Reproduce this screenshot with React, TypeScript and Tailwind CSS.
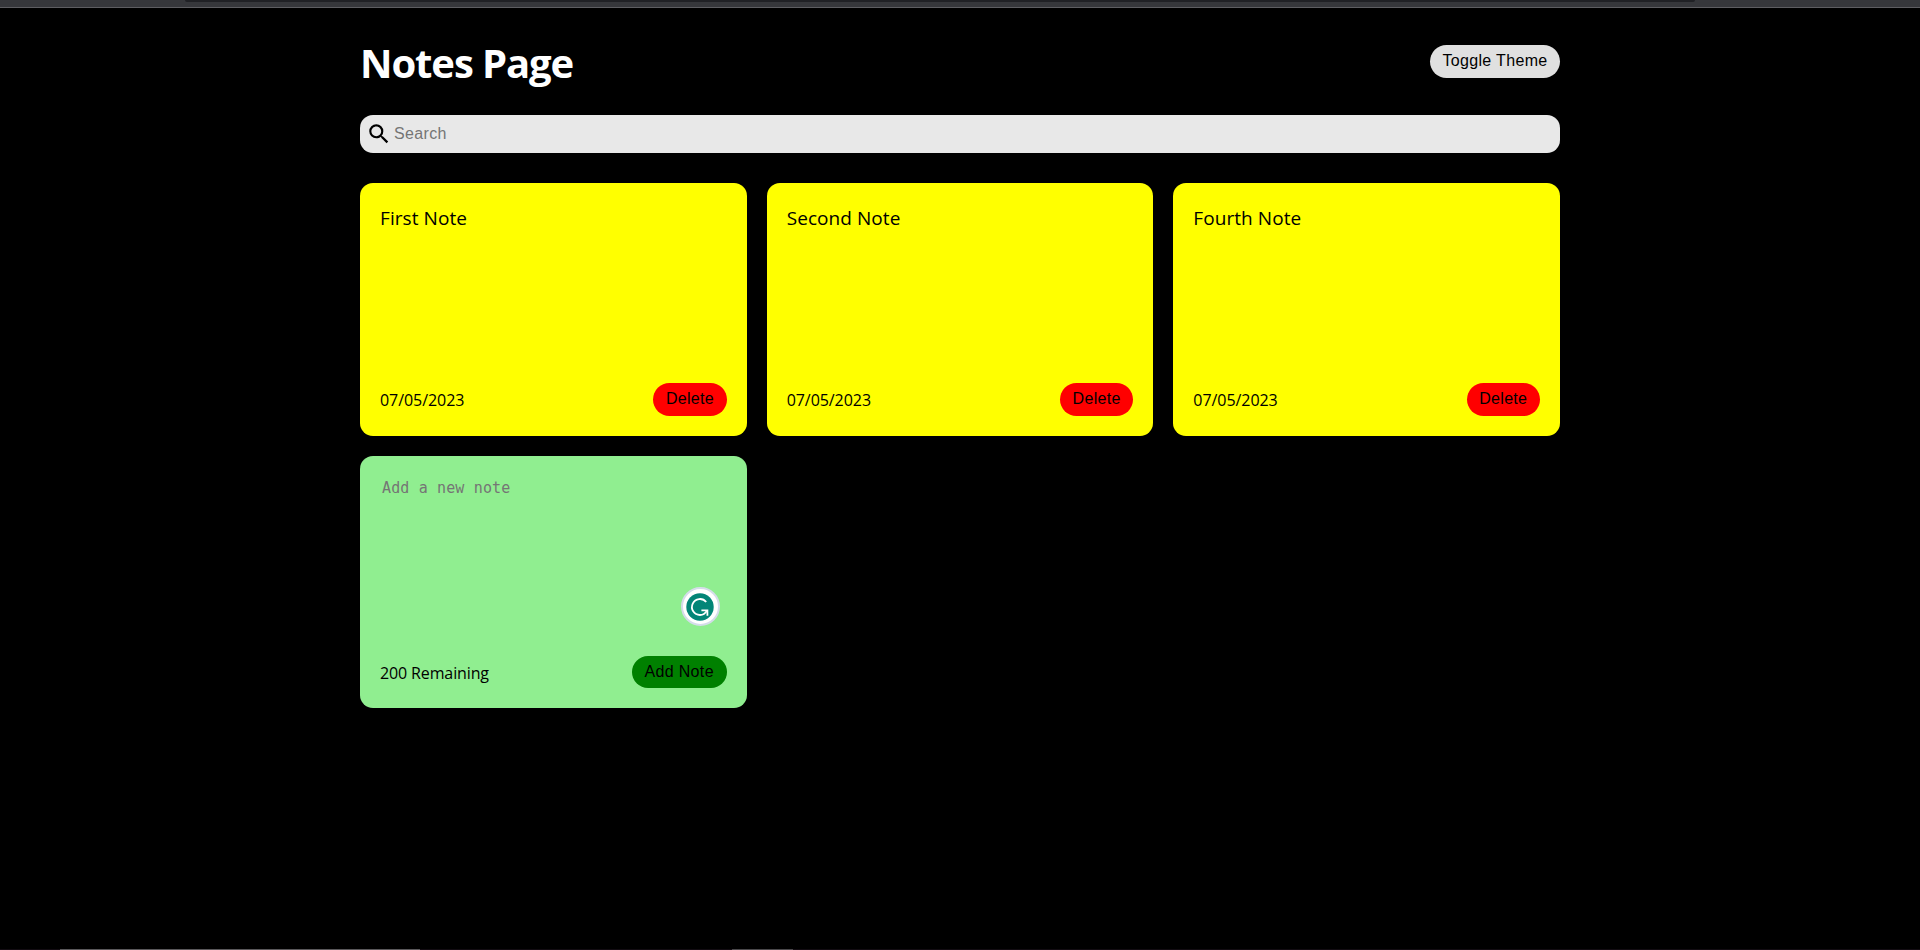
import { useState } from "react";

const notes = [
  { id: 1, text: "First Note", date: "07/05/2023" },
  { id: 2, text: "Second Note", date: "07/05/2023" },
  { id: 3, text: "Fourth Note", date: "07/05/2023" },
];

const LIMIT = 200;

function SearchIcon() {
  return (
    <svg viewBox="0 0 24 24" className="size-[26px] shrink-0" fill="black">
      <path d="M15.5 14h-.79l-.28-.27A6.471 6.471 0 0 0 16 9.5 6.5 6.5 0 1 0 9.5 16c1.61 0 3.09-.59 4.23-1.57l.27.28v.79l5 4.99L20.49 19l-4.99-5zm-6 0C7.01 14 5 11.99 5 9.5S7.01 5 9.5 5 14 7.01 14 9.5 11.99 14 9.5 14z" />
    </svg>
  );
}

function GrammarBadge() {
  return (
    <div className="absolute right-[27px] bottom-[82px] flex size-[39px] items-center justify-center rounded-full border-2 border-[#d5dcea] bg-white">
      <svg viewBox="0 0 28 28" className="size-7">
        <circle cx="14" cy="14" r="13.7" fill="#028577" />
        <g fill="none" stroke="white" strokeWidth="1.8">
          <path d="M20.2 9A8 8 0 1 0 14 22C17 22 19.2 20.6 20.9 17.6" />
          <path d="M15.4 17.3H21.4V22.8" />
        </g>
      </svg>
    </div>
  );
}

function NoteCard({ text, date }: { text: string; date: string }) {
  return (
    <article className="flex flex-col justify-between rounded-[13px] bg-[#ffff00] p-5">
      <p className="pt-px text-[19px] leading-[28px] tracking-[0.07px]">{text}</p>
      <div className="flex items-center justify-between">
        <span className="pt-px text-[16px] tracking-[-0.06px]">{date}</span>
        <button className="flex h-[33px] w-[73.4px] justify-center rounded-full bg-[#ff0000] pt-[5px] font-['Liberation_Sans',sans-serif] text-[16px] leading-[22px] tracking-[0.3px]">
          Delete
        </button>
      </div>
    </article>
  );
}

export default function App() {
  const [draft, setDraft] = useState("");
  return (
    <div className="relative flex h-[950px] flex-col overflow-hidden bg-black font-['Open_Sans','Noto_Sans',sans-serif] text-black">
      <div className="h-2 shrink-0 border-b border-[#5e5e62] bg-[#36373b]">
        <div className="mr-[225px] ml-[185px] h-0.5 rounded-b-sm bg-[#202125]" />
      </div>
      <main className="mx-auto w-[1200px] flex-1">
        <header className="flex h-[107px] items-start justify-between pt-[37px]">
          <h1 className="text-[40px] leading-[36px] font-bold tracking-[-1.1px] text-white">Notes Page</h1>
          <button className="flex h-[33px] w-[130px] justify-center rounded-full bg-[#e0e0e0] pt-[5px] font-['Liberation_Sans',sans-serif] text-[16px] leading-[22px] tracking-[0.34px]">
            Toggle Theme
          </button>
        </header>
        <div className="flex h-[38px] items-center rounded-[13px] bg-[#e8e8e8] pl-[6px]">
          <SearchIcon />
          <input
            className="ml-[2px] flex-1 bg-transparent pb-px font-['Liberation_Sans',sans-serif] text-[16px] tracking-[0.35px] outline-none placeholder:text-[#757575]"
            placeholder="Search"
          />
        </div>
        <section className="mt-[30px] grid auto-rows-[252.6px] grid-cols-3 gap-5">
          {notes.map((n) => (
            <NoteCard key={n.id} text={n.text} date={n.date} />
          ))}
          <article className="relative flex flex-col justify-between rounded-[13px] bg-[#90ee90] p-5">
            <textarea
              className="h-[140px] w-full resize-none bg-transparent px-0.5 font-['DejaVu_Sans_Mono',monospace] text-[15px] leading-[24px] tracking-[0.14px] outline-none placeholder:text-[#757575]"
              placeholder="Add a new note"
              maxLength={LIMIT}
              value={draft}
              onChange={(e) => setDraft(e.target.value)}
            />
            <div className="flex items-center justify-between">
              <span className="pt-[2px] text-[16px] tracking-[-0.13px]">{LIMIT - draft.length} Remaining</span>
              <button className="flex h-[32px] w-[95px] justify-center rounded-full bg-[#008000] pt-[5px] font-['Liberation_Sans',sans-serif] text-[16px] leading-[22px] tracking-[0.35px]">
                Add Note
              </button>
            </div>
            <GrammarBadge />
          </article>
        </section>
      </main>
      <footer className="flex h-px shrink-0 bg-[#120c12]">
        <div className="ml-[60px] w-[360px] bg-[#5a585b]" />
        <div className="ml-[312px] w-[61px] bg-[#4a484b]" />
      </footer>
    </div>
  );
}
